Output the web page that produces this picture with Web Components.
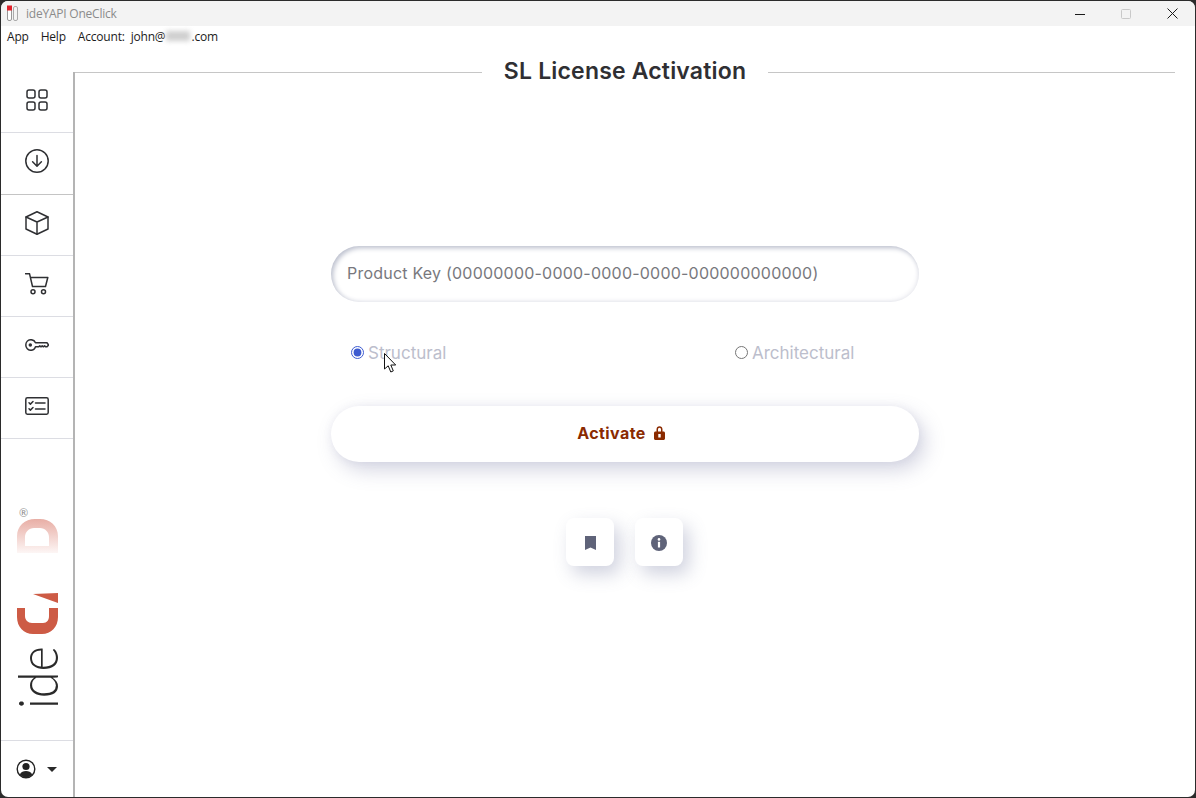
<!DOCTYPE html>
<html lang="en">
<head>
<meta charset="utf-8">
<title>ideYAPI OneClick</title>
<style>
    html, body {
        margin: 0;
        padding: 0;
        height: 100%;
        overflow: hidden;
        background: #2b2b2b;
    }
</style>
</head>
<body>
<app-window>
    <title-bar slot="top">ideYAPI OneClick</title-bar>
    <menu-bar slot="top"></menu-bar>
    <side-bar slot="side"></side-bar>
    <license-panel></license-panel>
    <mouse-cursor slot="over"></mouse-cursor>
</app-window>

<script>
class AppWindow extends HTMLElement {
    constructor() {
        super();
        this.shadowDOM = this.attachShadow({mode: 'open'});
        this.shadowDOM.innerHTML = `
        <style>
            :host {
                display: block;
                position: relative;
                width: 1194px;
                height: 796px;
                margin: 1px;
                background: #fff;
                border-radius: 7px;
                overflow: hidden;
            }
            .main {
                display: flex;
                height: 751px;
            }
        </style>
        <slot name="top"></slot>
        <div class="main">
            <slot name="side"></slot>
            <slot></slot>
        </div>
        <slot name="over"></slot>
        `;
    }
}

class TitleBar extends HTMLElement {
    constructor() {
        super();
        this.shadowDOM = this.attachShadow({mode: 'open'});
        this.shadowDOM.innerHTML = `
        <style>
            :host {
                display: flex;
                align-items: center;
                height: 25px;
                background: #f3f3f3;
                font: 12px "Open Sans", sans-serif;
                color: #8b8b8b;
            }
            .app-icon { margin: 0 7px 0 5px; }
            .title { flex: 1; letter-spacing: -0.22px; }
            .ctl { width: 46px; height: 25px; display: flex; align-items: center; justify-content: center; }
        </style>
        <svg class="app-icon" width="13" height="17" viewBox="0 0 13 17">
            <rect x="1.5" y="1.5" width="4" height="14" rx="1.5" fill="#fff" stroke="#999"/>
            <rect x="7.5" y="1.5" width="4" height="14" rx="1.5" fill="#f4f4f4" stroke="#aaa"/>
            <rect x="1" y="0.5" width="5" height="5" fill="#e0202a"/>
        </svg>
        <span class="title"><slot></slot></span>
        <span class="ctl"><svg width="10" height="10" viewBox="0 0 10 10"><path d="M0 5.5H10" stroke="#1a1a1a"/></svg></span>
        <span class="ctl"><svg width="10" height="10" viewBox="0 0 10 10"><rect x=".5" y=".5" width="9" height="9" rx="1" fill="none" stroke="#c9c9c9"/></svg></span>
        <span class="ctl"><svg width="11" height="11" viewBox="0 0 11 11"><path d="M.5 .5L10.5 10.5M10.5 .5L.5 10.5" stroke="#1a1a1a"/></svg></span>
        `;
    }
}

class MenuBar extends HTMLElement {
    constructor() {
        super();
        this.shadowDOM = this.attachShadow({mode: 'open'});
        this.shadowDOM.innerHTML = `
        <style>
            :host {
                display: flex;
                align-items: center;
                height: 20px;
                padding-left: 6px;
                background: #fff;
                font: 12px "Open Sans", sans-serif;
                letter-spacing: -0.2px;
                color: #1b1b1b;
            }
            .help { margin-left: 12px; }
            .account { margin-left: 12px; }
            .mail { margin-left: 6px; display: flex; align-items: center; }
            .blur {
                width: 24px;
                height: 10px;
                margin: 0 1px;
                background: #cfcfcf;
                filter: blur(2.5px);
            }
        </style>
        <span>App</span>
        <span class="help">Help</span>
        <span class="account">Account:</span>
        <span class="mail">john@<span class="blur"></span>.com</span>
        `;
    }
}

const SIDE_ICONS = {
    grid: `<rect x="1" y="1" width="8" height="8" rx="2"/><rect x="13" y="1" width="8" height="8" rx="2"/><rect x="1" y="13" width="8" height="8" rx="2"/><rect x="13" y="13" width="8" height="8" rx="2"/>`,
    download: `<circle cx="12" cy="12" r="11.2"/><path d="M12 6.5V17M7.6 12.8L12 17.2L16.4 12.8"/>`,
    box: `<path d="M12 .8L23 6V18L12 23.2L1 18V6Z"/><path d="M1 6L12 11L23 6M12 11V23"/>`,
    cart: `<path d="M.5 .7H4.500L7.500 13.500H20.500L22.800 4.500H5.500"/><circle cx="8" cy="18.700" r="2"/><circle cx="18.500" cy="18.700" r="2"/>`,
    key: `<path d="M6 .7C8.200 .7 9.800 2 10.500 3.800H22L23.600 6L22 7.800H20.800L19.600 6.800L18.400 7.800L17.200 6.800L16 7.800L14.800 6.800L13.600 7.800H10.500C9.800 10 8.200 11.300 6 11.300C3 11.300 .8 9 .8 6C.8 3 3 .7 6 .7Z"/><circle cx="5.300" cy="6" r="1" fill="#2f3033"/>`,
    list: `<rect x=".8" y=".8" width="22.400" height="16.400" rx="1.600"/><path d="M4 5.700L5.400 7.100L8 4.500M4 11.700L5.400 13.100L8 10.500M10.500 6H20M10.500 12H20"/>`
};

class SideItem extends HTMLElement {
    constructor() {
        super();
        this.shadowDOM = this.attachShadow({mode: 'open'});
    }

    connectedCallback() {
        const w = this.getAttribute('w');
        const h = this.getAttribute('h');
        this.shadowDOM.innerHTML = `
        <style>
            :host {
                display: flex;
                align-items: center;
                justify-content: center;
                height: 55px;
                padding-bottom: 5px;
                border-bottom: 1px solid #dcdde3;
            }
            :host([thick]) { height: 55px; padding-bottom: 6px; border-bottom: 1px solid #c4c4c4; }
            svg { fill: none; stroke: #2f3033; stroke-width: 1.5; stroke-linejoin: round; stroke-linecap: round; }
        </style>
        <svg width="${w}" height="${h}" viewBox="0 0 ${w} ${h}">${SIDE_ICONS[this.getAttribute('icon')]}</svg>
        `;
    }
}

class SideBar extends HTMLElement {
    constructor() {
        super();
        this.shadowDOM = this.attachShadow({mode: 'open'});
        this.shadowDOM.innerHTML = `
        <style>
            :host {
                display: flex;
                flex-direction: column;
                width: 72px;
                flex: none;
                padding-top: 26px;
                box-sizing: border-box;
            }
            .logo { display: block; margin-top: 67px; overflow: visible; }
            .foot {
                margin-top: auto;
                height: 56px;
                border-top: 1px solid #dcdde3;
                display: flex;
                align-items: center;
                padding-left: 15px;
                gap: 11px;
            }
            .caret { width: 0; height: 0; border: 5px solid transparent; border-top-color: #2a2a2a; border-bottom: 0; }
            text { font-family: Lato, sans-serif; }
        </style>
        <side-item icon="grid" w="22" h="22"></side-item>
        <side-item icon="download" w="24" h="24" thick></side-item>
        <side-item icon="box" w="24" h="24"></side-item>
        <side-item icon="cart" w="24" h="22"></side-item>
        <side-item icon="key" w="24" h="12"></side-item>
        <side-item icon="list" w="24" h="18"></side-item>
        <svg class="logo" width="72" height="204" viewBox="0 0 72 204">
            <defs>
                <linearGradient id="fade" x1="0" y1="0" x2="0" y2="1">
                    <stop offset="0" stop-color="#e8aea5"/>
                    <stop offset="1" stop-color="#fdf6f5"/>
                </linearGradient>
            </defs>
            <text x="22.500" y="10.500" font-size="11" fill="#8e8e8e" text-anchor="middle">®</text>
            <path fill="url(#fade)" fill-rule="evenodd" d="M16 47V30C16 20 24 13 34 13H39C49 13 57 20 57 30V47ZM24 40H48V31C48 26 44 22 39 22H33C28 22 24 26 24 31Z"/>
            <path fill="#cd5b45" d="M16 102H24V110C24 114 27 117 31 117H42C46 117 48 114 48 110V102H57V111C57 121 50 128 41 128H32C23 128 16 121 16 111Z"/>
            <path fill="#cd5b45" d="M32 88L57 87V97Z"/>
            <text transform="translate(57 203) rotate(-90)" font-size="55" font-weight="300" fill="#2a2a2a" textLength="63" lengthAdjust="spacingAndGlyphs">ide</text>
        </svg>
        <div class="foot">
            <svg width="20" height="20" viewBox="0 0 20 20">
                <circle cx="10" cy="10" r="8.800" fill="none" stroke="#222" stroke-width="1.400"/>
                <circle cx="10" cy="7.500" r="3.600" fill="#222"/>
                <path d="M3.800 15.600C5 12.800 7.500 12 10 12C12.500 12 15 12.800 16.200 15.600C14.600 17.600 12.400 18.600 10 18.600C7.600 18.600 5.400 17.600 3.800 15.600Z" fill="#222"/>
            </svg>
            <span class="caret"></span>
        </div>
        `;
    }
}

class LicensePanel extends HTMLElement {
    constructor() {
        super();
        this.shadowDOM = this.attachShadow({mode: 'open'});
        this.shadowDOM.innerHTML = `
        <style>
            :host {
                display: block;
                flex: 1;
                margin-top: 26px;
                border-left: 2px solid #b4b4b4;
                padding-right: 20px;
                font-family: Inter, "Liberation Sans", sans-serif;
            }
            header {
                display: flex;
                align-items: center;
                height: 30px;
                margin-top: -15px;
            }
            header::before, header::after {
                content: "";
                flex: 1;
                height: 1px;
                background: #c6c6c6;
            }
            h1 {
                margin: 0 22px 2px;
                font-size: 23px;
                line-height: 30px;
                font-weight: 600;
                color: #2f2f33;
                letter-spacing: 0.18px;
            }
            .form {
                width: 588px;
                margin: 159px auto 0;
            }
            .types {
                display: grid;
                grid-template-columns: 384px 1fr;
                margin-top: 41px;
                padding-left: 20px;
            }
            .buttons {
                display: flex;
                justify-content: center;
                gap: 21px;
                margin-top: 56px;
                padding-right: 1px;
            }
        </style>
        <header><h1>SL License Activation</h1></header>
        <div class="form">
            <key-field>Product Key (00000000-0000-0000-0000-000000000000)</key-field>
            <div class="types">
                <type-radio checked>Structural</type-radio>
                <type-radio>Architectural</type-radio>
            </div>
            <activate-button>Activate</activate-button>
            <div class="buttons">
                <icon-button icon="bookmark"></icon-button>
                <icon-button icon="info"></icon-button>
            </div>
        </div>
        `;
    }
}

class KeyField extends HTMLElement {
    constructor() {
        super();
        this.shadowDOM = this.attachShadow({mode: 'open'});
        this.shadowDOM.innerHTML = `
        <style>
            :host {
                display: flex;
                align-items: center;
                height: 56px;
                padding: 0 0 2px 16px;
                box-sizing: border-box;
                border-radius: 28px;
                font-size: 16px;
                letter-spacing: 0.22px;
                color: #78787d;
                box-shadow: inset 2px 2px 5px #babecc, inset -2px -2px 4px #f4f4f7;
            }
        </style>
        <slot></slot>
        `;
    }
}

class TypeRadio extends HTMLElement {
    constructor() {
        super();
        this.shadowDOM = this.attachShadow({mode: 'open'});
    }

    connectedCallback() {
        this.shadowDOM.innerHTML = `
        <style>
            :host {
                display: flex;
                align-items: center;
                gap: 4px;
                height: 20px;
                font-size: 17px;
                color: #bcbecc;
            }
            input {
                margin: 0;
                width: 13px;
                height: 13px;
                position: relative;
                top: -1px;
                accent-color: #3d5bd0;
            }
        </style>
        <input type="radio" name="type" ${this.hasAttribute('checked') ? 'checked' : ''}>
        <slot></slot>
        `;
    }
}

class ActivateButton extends HTMLElement {
    constructor() {
        super();
        this.shadowDOM = this.attachShadow({mode: 'open'});
        this.shadowDOM.innerHTML = `
        <style>
            :host {
                display: flex;
                align-items: center;
                justify-content: center;
                gap: 8px;
                height: 56px;
                margin-top: 43px;
                padding: 0 8px 2px 0;
                box-sizing: border-box;
                border-radius: 28px;
                background: #fff;
                font-size: 16px;
                letter-spacing: 0.4px;
                font-weight: 700;
                color: #8a2a00;
                box-shadow: 6px 8px 20px rgba(100, 105, 150, 0.28), 0 0 8px rgba(100, 105, 150, 0.08);
            }
        </style>
        <slot></slot>
        <svg width="11" height="14" viewBox="0 0 11 14">
            <path fill="#8a2a00" fill-rule="evenodd" d="M1.500 5.500H2.500V3.500C2.500 1.500 3.800 .3 5.500 .3C7.200 .3 8.500 1.500 8.500 3.500V5.500H9.500C10.300 5.500 11 6.200 11 7V12.500C11 13.300 10.300 14 9.500 14H1.500C.7 14 0 13.300 0 12.500V7C0 6.200 .7 5.500 1.500 5.500ZM4 5.500H7V3.500C7 2.500 6.400 1.800 5.500 1.800C4.600 1.800 4 2.500 4 3.500ZM4.300 8V11.500H6.700V8Z"/>
        </svg>
        `;
    }
}

class IconButton extends HTMLElement {
    constructor() {
        super();
        this.shadowDOM = this.attachShadow({mode: 'open'});
    }

    connectedCallback() {
        const icons = {
            bookmark: `<svg width="11" height="14" viewBox="0 0 11 14"><path fill="#5f6379" d="M0 0H11V14L5.500 11.500L0 14Z"/></svg>`,
            info: `<svg width="16" height="16" viewBox="0 0 16 16"><circle cx="8" cy="8" r="8" fill="#5f6379"/><rect x="6.900" y="6.800" width="2.200" height="5.700" fill="#fff"/><circle cx="8" cy="4.400" r="1.300" fill="#fff"/></svg>`
        };
        this.shadowDOM.innerHTML = `
        <style>
            :host {
                display: flex;
                align-items: center;
                justify-content: center;
                width: 48px;
                height: 48px;
                border-radius: 8px;
                background: #fff;
                box-shadow: 6px 8px 18px rgba(100, 105, 150, 0.30);
            }
            svg { position: relative; top: 1px; }
        </style>
        ${icons[this.getAttribute('icon')]}
        `;
    }
}

class MouseCursor extends HTMLElement {
    constructor() {
        super();
        this.shadowDOM = this.attachShadow({mode: 'open'});
        this.shadowDOM.innerHTML = `
        <style>
            :host {
                position: absolute;
                left: 383px;
                top: 352px;
                width: 14px;
                height: 20px;
            }
        </style>
        <svg width="14" height="20" viewBox="0 0 14 20">
            <path d="M.5 .5V16L4.200 12.800L6.800 19L9.300 17.900L6.800 12H11.700Z" fill="#fff" stroke="#111" stroke-width="1" stroke-linejoin="round"/>
        </svg>
        `;
    }
}

customElements.define('app-window', AppWindow);
customElements.define('title-bar', TitleBar);
customElements.define('menu-bar', MenuBar);
customElements.define('side-item', SideItem);
customElements.define('side-bar', SideBar);
customElements.define('license-panel', LicensePanel);
customElements.define('key-field', KeyField);
customElements.define('type-radio', TypeRadio);
customElements.define('activate-button', ActivateButton);
customElements.define('icon-button', IconButton);
customElements.define('mouse-cursor', MouseCursor);
</script>
</body>
</html>
